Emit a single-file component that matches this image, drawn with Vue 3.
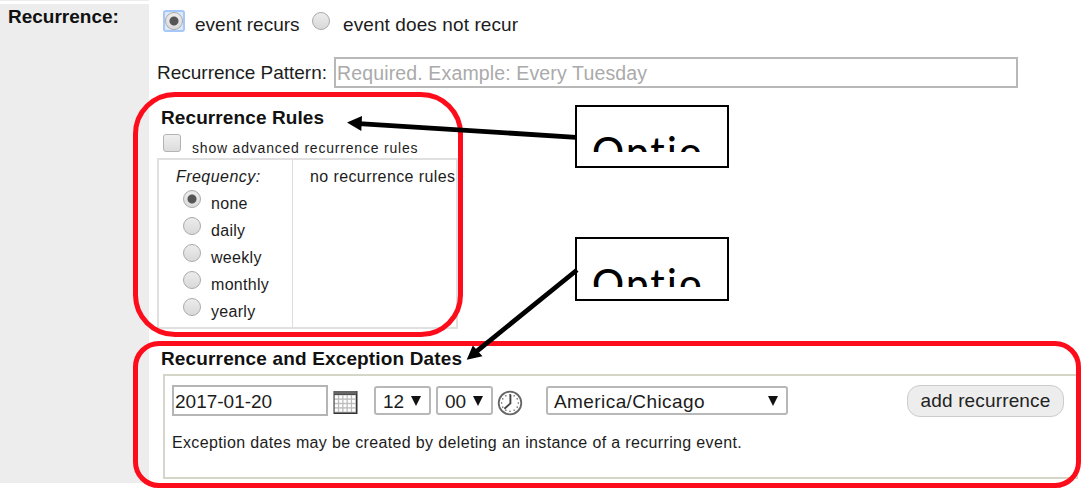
<script setup>
import { ref } from 'vue'

const recurs = ref(true)
const frequencies = ['none', 'daily', 'weekly', 'monthly', 'yearly']
const frequency = ref('none')
const clockTicks = [0, 30, 60, 90, 120, 150, 180, 210, 240, 270, 300, 330]
</script>

<template>
  <div class="page">
    <aside class="side">
      <div class="strip"></div>
      <div class="side-label">Recurrence:</div>
    </aside>

    <main class="content">
      <div class="mode-row">
        <span class="focus"><span class="radio" :class="{ on: recurs }"></span></span>
        <span class="mode-text first" @click="recurs = true">event recurs</span>
        <span class="radio second" :class="{ on: !recurs }"></span>
        <span class="mode-text other" @click="recurs = false">event does not recur</span>
      </div>

      <div class="pattern-row">
        <label class="pattern-label">Recurrence Pattern:</label>
        <div class="pattern-input">Required. Example: Every Tuesday</div>
      </div>

      <h2 class="rules-title">Recurrence Rules</h2>
      <div class="advanced">
        <span class="checkbox"></span>
        <span class="advanced-text">show advanced recurrence rules</span>
      </div>
      <div class="rules">
        <div class="freq">
          <div class="freq-title">Frequency:</div>
          <div v-for="f in frequencies" :key="f" class="freq-item" @click="frequency = f">
            <span class="radio" :class="{ on: f === frequency }"></span>
            <span class="freq-name">{{ f }}</span>
          </div>
        </div>
        <div class="no-rules">no recurrence rules</div>
      </div>

      <h2 class="dates-title">Recurrence and Exception Dates</h2>
      <section class="dates">
        <div class="controls">
          <div class="date-input">2017-01-20</div>
          <svg class="calendar" width="25" height="24" viewBox="0 0 25 24">
            <rect x="0.5" y="1" width="24" height="23" fill="#333" />
            <rect x="1" y="1" width="22.5" height="3.5" fill="#666" />
            <rect x="1.5" y="5" width="21.5" height="17.5" fill="#bdbdbd" />
            <g fill="#fff">
              <template v-for="r in 4" :key="r">
                <rect v-for="c in 5" :key="c" :x="c * 4.3 - 2.4" :y="r * 4.4 + 1" width="3" height="3" />
              </template>
            </g>
          </svg>
          <div class="select hour"><span>12</span><i class="caret"></i></div>
          <div class="select minute"><span>00</span><i class="caret"></i></div>
          <svg class="clock" width="26" height="26" viewBox="0 0 26 26">
            <circle cx="13" cy="13" r="11.3" fill="#fff" stroke="#666" stroke-width="1.8" />
            <circle
              v-for="a in clockTicks" :key="a" cx="13" cy="4.7" r="0.75" fill="#555"
              :transform="`rotate(${a} 13 13)`"
            />
            <path d="M13.4 4.5V13.4L7.4 18.7" fill="none" stroke="#444" stroke-width="1.9" />
          </svg>
          <div class="select zone"><span>America/Chicago</span><i class="caret"></i></div>
          <button class="add">add recurrence</button>
        </div>
        <p class="hint">Exception dates may be created by deleting an instance of a recurring event.</p>
      </section>
    </main>

    <div class="outline rules-outline"></div>
    <div class="outline dates-outline"></div>
    <div class="callout top"><div class="callout-text">Optio</div></div>
    <div class="callout bottom"><div class="callout-text">Optio</div></div>
    <svg class="arrows" width="1090" height="498" viewBox="0 0 1090 498">
      <path d="M576 137.3L359 123.6M577 270L476 351.8" stroke="#000" stroke-width="4.8" />
      <path d="M347 122.5L362 116L361.3 131ZM466.7 359.7L472.8 345.6L482.5 356.2Z" />
    </svg>
  </div>
</template>

<style>
body {
  margin: 0;
  background: #fff;
}
</style>

<style scoped>
.page {
  position: relative;
  display: flex;
  width: 1090px;
  height: 498px;
  overflow: hidden;
  background: #fff;
  color: #1c1c1c;
  font-family: "Liberation Sans", Arial, sans-serif;
  font-size: 19px;
  line-height: 24px;
  white-space: nowrap;
}
.side {
  width: 149px;
}
.strip {
  height: 1px;
  margin-bottom: 3px;
  background: #ededed;
}
.side-label {
  box-sizing: border-box;
  height: 479px;
  padding: 1px 0 0 8px;
  background: #ededed;
  font-weight: bold;
  color: #111;
}
.content {
  flex: 1;
}
.radio {
  box-sizing: border-box;
  flex: none;
  display: block;
  width: 18px;
  height: 18px;
  border: 1.5px solid #aaa;
  border-radius: 50%;
  background: linear-gradient(#ececec, #d9d9d9);
}
.radio.on {
  background: radial-gradient(circle, #555 0 4px, transparent 5px), linear-gradient(#ececec, #dcdcdc);
}
.mode-row {
  display: flex;
  align-items: flex-start;
  height: 47px;
  padding: 10px 0 0 14px;
}
.focus {
  box-sizing: border-box;
  width: 22px;
  height: 22px;
  border: 2px solid #a5c7fa;
  border-radius: 3px;
  background: #dfe8f5;
}
.mode-text {
  margin-top: 3px;
}
.first {
  margin-left: 10px;
  width: 105px;
}
.second {
  margin: 2px 0 0 12px;
}
.other {
  margin-left: 13px;
  letter-spacing: 0.1px;
}
.pattern-row {
  display: flex;
  height: 31px;
  padding-left: 8px;
}
.pattern-label {
  width: 177px;
  margin-top: 4px;
}
.pattern-input {
  box-sizing: border-box;
  width: 684px;
  height: 31px;
  padding: 2px 0 0 1px;
  border: 2px solid #b8b8b8;
  color: #aaa;
  font-size: 19.5px;
  letter-spacing: 0.14px;
}
h2 {
  margin: 0;
  font-size: 19px;
  line-height: 24px;
  color: #111;
}
.rules-title {
  margin: 18px 0 0 12px;
  letter-spacing: 0.1px;
}
.advanced {
  display: flex;
  height: 28px;
  padding-left: 14px;
}
.checkbox {
  box-sizing: border-box;
  width: 18px;
  height: 18px;
  margin-top: 4px;
  border: 1.5px solid #b3b3b3;
  border-radius: 3px;
  background: linear-gradient(#efefef, #dcdcdc);
}
.advanced-text {
  margin: 6px 0 0 11px;
  font-size: 14px;
  letter-spacing: 0.8px;
}
.rules {
  box-sizing: border-box;
  display: flex;
  width: 301px;
  height: 171px;
  margin-left: 8px;
  border: 2px solid #e0e0e0;
  font-size: 16px;
  line-height: 20px;
}
.freq {
  box-sizing: border-box;
  width: 134px;
  padding: 7px 0 0 17px;
  border-right: 1.5px solid #ddd;
}
.freq-title {
  height: 22px;
  font-style: italic;
  letter-spacing: 0.45px;
}
.freq-item {
  display: flex;
  height: 27px;
  padding-left: 7px;
}
.freq-item .radio {
  margin-top: 1px;
}
.freq-name {
  margin: 5px 0 0 10px;
  letter-spacing: 0.3px;
}
.no-rules {
  margin: 7px 0 0 17px;
  letter-spacing: 0.4px;
}
.dates-title {
  margin: 18px 0 0 12px;
  letter-spacing: 0.15px;
}
.dates {
  box-sizing: border-box;
  width: 915px;
  height: 105px;
  margin: 3px 0 0 14px;
  border: 2px solid #d6d6c8;
}
.controls {
  display: flex;
  align-items: flex-start;
  padding: 9px 0 0 7px;
}
.date-input {
  box-sizing: border-box;
  width: 156px;
  height: 31px;
  padding: 3px 0 0 1px;
  border: 2px solid #b5b5b5;
}
.calendar {
  margin: 5px 0 0 5px;
}
.select {
  box-sizing: border-box;
  display: flex;
  justify-content: space-between;
  height: 29px;
  padding: 2px 8px 0 7px;
  border: 2px solid #b8b8b8;
  border-radius: 3px;
  background: #fff;
}
.caret {
  width: 10px;
  height: 10px;
  margin-top: 6px;
  background: #111;
  clip-path: polygon(0 0, 100% 0, 50% 100%);
}
.hour {
  width: 57px;
  margin: 1px 0 0 16px;
}
.minute {
  width: 57px;
  margin: 1px 0 0 5px;
}
.clock {
  margin: 5px 0 0 4px;
}
.zone {
  width: 242px;
  margin: 1px 0 0 23px;
  padding-left: 6px;
  letter-spacing: 0.42px;
}
.add {
  box-sizing: border-box;
  width: 157px;
  height: 32px;
  margin-left: 119px;
  padding: 0;
  border: 1.5px solid #ccc;
  border-radius: 13px;
  background: #ededed;
  color: #222;
  font: 19px/28px "Liberation Sans", Arial, sans-serif;
  letter-spacing: 0.15px;
}
.hint {
  margin: 16px 0 0 7px;
  font-size: 16px;
  line-height: 20px;
  letter-spacing: 0.35px;
}
.outline {
  position: absolute;
  box-sizing: border-box;
  border: 5px solid #fd0d1b;
}
.rules-outline {
  left: 133px;
  top: 92px;
  width: 330px;
  height: 245px;
  border-radius: 42px;
}
.dates-outline {
  left: 133px;
  top: 341px;
  width: 948px;
  height: 147px;
  border-radius: 26px;
}
.callout {
  position: absolute;
  left: 575px;
  box-sizing: border-box;
  width: 154px;
  height: 63px;
  border: 2px solid #000;
  background: #fff;
}
.callout.top {
  top: 105px;
}
.callout.bottom {
  top: 237px;
  height: 64px;
}
.callout-text {
  height: 45px;
  padding-left: 15px;
  overflow: hidden;
  color: #000;
  font-family: Lato, sans-serif;
  font-size: 40px;
  font-weight: 500;
  letter-spacing: 2.2px;
  line-height: 89px;
}
.bottom .callout-text {
  height: 48px;
}
.arrows {
  position: absolute;
  left: 0;
  top: 0;
}
</style>
